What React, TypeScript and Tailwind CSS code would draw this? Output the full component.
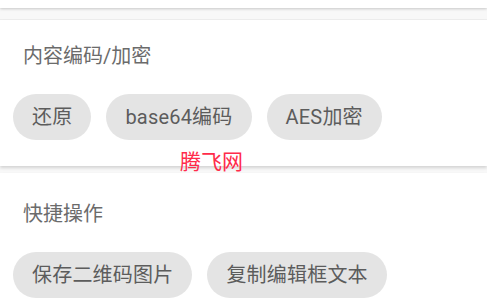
import React from 'react';

const font = { fontFamily: '"Roboto", "Noto Sans CJK SC", sans-serif' };

function Chip({ label }: { label: string }) {
  return (
    <button className="h-[46px] px-[19px] rounded-full bg-[#e4e4e4] text-[20px] tracking-[0.2px] text-[#5c5c5c] leading-none">
      {label}
    </button>
  );
}

function Section({ title, chips, className }: { title: string; chips: string[]; className?: string }) {
  return (
    <div className={`bg-white shadow-[0_2px_3px_rgba(0,0,0,0.15)] ${className ?? ''}`}>
      <div className="px-[23px] text-[20px] leading-[24px] text-[#6b6b6b]">{title}</div>
      <div className="flex gap-[15px] px-[13px] mt-[26px]">
        {chips.map((c) => (
          <Chip key={c} label={c} />
        ))}
      </div>
    </div>
  );
}

export default function App() {
  return (
    <div className="relative w-[487px] h-[307px] overflow-hidden bg-[#f8f8f8]" style={font}>
      {/* bottom of the card above */}
      <div className="h-[8px] bg-white shadow-[0_1px_3px_rgba(0,0,0,0.2)]" />
      <div className="h-[11px]" />
      <div className="h-px bg-[#eeeeee]" />

      <Section title="内容编码/加密" chips={['还原', 'base64编码', 'AES加密']} className="pt-[24px] pb-[26px]" />
      <div className="h-[7px]" />
      <Section title="快捷操作" chips={['保存二维码图片', '复制编辑框文本']} className="pt-[29px] pb-[20px]" />

      {/* watermark */}
      <div className="absolute left-[180px] top-[149px] text-[21px] leading-[26px] text-[#ff2b4a]">腾飞网</div>
    </div>
  );
}
